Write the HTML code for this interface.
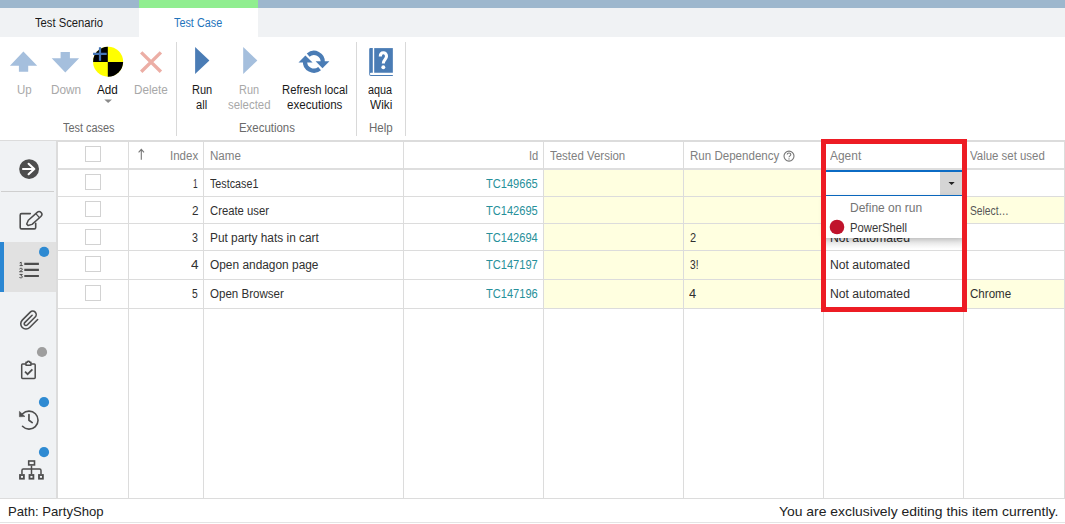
<!DOCTYPE html>
<html>
<head>
<meta charset="utf-8">
<title>Test Case</title>
<style>
*{box-sizing:border-box;margin:0;padding:0}
html,body{width:1065px;height:524px;overflow:hidden;background:#fff;font-family:"Liberation Sans",sans-serif;font-size:12px;color:#222}
.abs{position:absolute}
#topstrip{left:0;top:0;width:1065px;height:7.6px;background:#9db7cd}
#topgreen{left:139px;top:0;width:119px;height:7.6px;background:#90ee90}
#tabrow{left:0;top:7.6px;width:1065px;height:29.2px;background:#f0f2f4}
#tabactive{left:139px;top:7.6px;width:119px;height:29.2px;background:#fff}
#ribbon{left:0;top:36.8px;width:1065px;height:103.2px;background:#fff}
.vsep{width:1px;background:#d9d9d9;top:41.5px;height:94px}
#sidebar{left:0;top:141px;width:56px;height:357px;background:#f0f2f4}
#hline{left:0;top:140px;width:1065px;height:1.2px;background:#dcdcdc}
#hline2{left:56px;top:140px;width:1009px;height:2.2px;background:#dcdcdc}
#gridleft{left:56.3px;top:141px;width:1.5px;height:357px;background:#dcdcdc}
.hl{left:57px;width:1008px;height:1px;background:#dcdcdc}
.vl{top:141px;width:1px;height:357px;background:#dcdcdc}
.cell{font-size:12px;line-height:16px;white-space:nowrap;color:#222}
.cb{width:16px;height:16px;border:1px solid #d2d2d2;background:#fff;left:85px}
.yel{background:#ffffe0}
#status{left:0;top:497.5px;width:1065px;height:26.5px;background:#fff;border-top:1.6px solid #dcdcdc}
#statusb{left:0;top:521.8px;width:1065px;height:1px;background:#e4e4e4}
</style>
</head>
<body>
<div class="abs" id="topstrip"></div>
<div class="abs" id="topgreen"></div>
<div class="abs" id="tabrow"></div>
<div class="abs" id="tabactive"></div>

<div class="abs cell" style="left:35.10px;top:14.84px;color:#1a1a1a;font-size:12px;transform:scaleX(0.9367);transform-origin:0 0;">Test Scenario</div>
<div class="abs cell" style="left:174.40px;top:14.84px;color:#1f74bc;font-size:12px;transform:scaleX(0.9035);transform-origin:0 0;">Test Case</div>

<div class="abs" id="ribbon"></div>
<div class="abs cell" style="left:16.70px;top:81.84px;color:#a8a8a8;font-size:12px;transform:scaleX(0.9577);transform-origin:0 0;">Up</div>
<div class="abs cell" style="left:51.30px;top:81.84px;color:#a8a8a8;font-size:12px;transform:scaleX(0.9837);transform-origin:0 0;">Down</div>
<div class="abs cell" style="left:97.30px;top:81.84px;color:#111;font-size:12px;transform:scaleX(0.9742);transform-origin:0 0;">Add</div>
<div class="abs cell" style="left:134.40px;top:81.84px;color:#a8a8a8;font-size:12px;transform:scaleX(0.9769);transform-origin:0 0;">Delete</div>
<div class="abs cell" style="left:191.60px;top:81.64px;color:#1a1a1a;font-size:12px;transform:scaleX(0.9182);transform-origin:0 0;">Run</div>
<div class="abs cell" style="left:195.80px;top:97.14px;color:#1a1a1a;font-size:12px;transform:scaleX(0.9250);transform-origin:0 0;">all</div>
<div class="abs cell" style="left:239.20px;top:81.64px;color:#a8a8a8;font-size:12px;transform:scaleX(0.9091);transform-origin:0 0;">Run</div>
<div class="abs cell" style="left:228.00px;top:97.14px;color:#a8a8a8;font-size:12px;transform:scaleX(0.9508);transform-origin:0 0;">selected</div>
<div class="abs cell" style="left:281.50px;top:81.64px;color:#1a1a1a;font-size:12px;transform:scaleX(0.9379);transform-origin:0 0;">Refresh local</div>
<div class="abs cell" style="left:286.70px;top:97.14px;color:#1a1a1a;font-size:12px;transform:scaleX(0.9660);transform-origin:0 0;">executions</div>
<div class="abs cell" style="left:368.40px;top:81.64px;color:#1a1a1a;font-size:12px;transform:scaleX(0.9026);transform-origin:0 0;">aqua</div>
<div class="abs cell" style="left:369.50px;top:97.14px;color:#1a1a1a;font-size:12px;transform:scaleX(0.9845);transform-origin:0 0;">Wiki</div>
<div class="abs cell" style="left:62.80px;top:119.74px;color:#6a6a6a;font-size:12px;transform:scaleX(0.9083);transform-origin:0 0;">Test cases</div>
<div class="abs cell" style="left:238.50px;top:119.74px;color:#6a6a6a;font-size:12px;transform:scaleX(0.9523);transform-origin:0 0;">Executions</div>
<div class="abs cell" style="left:368.80px;top:119.74px;color:#6a6a6a;font-size:12px;transform:scaleX(0.9595);transform-origin:0 0;">Help</div>


<svg class="abs" style="left:0;top:37px" width="420" height="101" viewBox="0 37 420 101">
  <!-- up -->
  <path d="M23.4 51.5 L37.2 65.8 L28.2 65.8 L28.2 71.8 L18.9 71.8 L18.9 65.8 L9.9 65.8 Z" fill="#a5bfdd"/>
  <!-- down -->
  <path d="M60.6 51.9 L69.9 51.9 L69.9 58.3 L79.1 58.3 L65.3 72.4 L51.7 58.3 L60.6 58.3 Z" fill="#a5bfdd"/>
  <!-- add -->
  <circle cx="108.1" cy="61.7" r="15" fill="#ffff00"/>
  <path d="M107.8 62 L107.8 46.7 A15 15 0 0 0 93.1 62 Z" fill="#000"/>
  <path d="M107.8 62 L107.8 76.7 A15 15 0 0 0 123.1 62 Z" fill="#000"/>
  <path d="M93.1 53.9 H106.7 M100 47.3 V60.7" stroke="#4575b6" stroke-width="2.2" fill="none"/>
  <!-- delete -->
  <path d="M141.2 52.4 L160.9 71.7 M160.9 52.4 L141.2 71.7" stroke="#ecaea5" stroke-width="3.4" fill="none"/>
  <!-- add caret -->
  <path d="M104.3 99.4 L112 99.4 L108.15 103 Z" fill="#8a8a8a"/>
  <!-- run all -->
  <path d="M195.1 46.9 L209.4 60.5 L195.1 74.1 Z" fill="#4a7cb5"/>
  <!-- run selected -->
  <path d="M243.2 46.9 L257.3 60.5 L243.2 74.1 Z" fill="#a5bfdd"/>
  <!-- refresh -->
  <g fill="none" stroke="#4a7cb5" stroke-width="4.3">
    <path d="M308.16 55.07 A8.85 8.85 0 0 1 322.75 62.5"/>
    <path d="M319.6 68.55 A8.85 8.85 0 0 1 305.05 61"/>
  </g>
  <path d="M298.5 62.6 L312.6 62.6 L305.4 55.6 Z" fill="#4a7cb5"/>
  <path d="M315.6 61.2 L329.4 61.2 L322.5 68.2 Z" fill="#4a7cb5"/>
  <!-- book -->
  <path d="M374.2 48.1 H392.85 V72.75 H374.2 Z" fill="#4a7cb5"/>
  <path d="M369.2 49.3 A1.2 1.2 0 0 1 370.4 48.1 H372.8 V72.8 H371 A0.9 0.9 0 0 0 371 75 H392.85 V76 H370.9 A1.7 1.7 0 0 1 369.2 74.3 Z" fill="#4a7cb5"/>
  <path d="M380.3 56.6 C380.3 51.6 386.5 51.6 386.5 56.3 C386.5 59.6 383.3 59.4 383.3 63.6" fill="none" stroke="#fff" stroke-width="3.1"/>
  <circle cx="383.3" cy="67.3" r="1.95" fill="#fff"/>
</svg>
<div class="abs vsep" style="left:176px"></div>
<div class="abs vsep" style="left:356px"></div>
<div class="abs vsep" style="left:405px"></div>



<div class="abs" id="sidebar"></div>

<div class="abs" style="left:0;top:242px;width:56px;height:50px;background:#e1e1e1"></div>
<div class="abs" style="left:0;top:242px;width:4px;height:50px;background:#2b87d3"></div>
<div class="abs" style="left:1px;top:191px;width:53px;height:1px;background:#cfcfcf"></div>
<svg class="abs" style="left:0;top:141px" width="57" height="359" viewBox="0 141 57 359">
  <!-- arrow circle -->
  <circle cx="29.1" cy="169.1" r="9.9" fill="#4d4d4d"/>
  <path d="M23 169 H34.3 M28.6 163.8 L34.3 169 L28.6 174.2" fill="none" stroke="#fff" stroke-width="2.1" stroke-linecap="round" stroke-linejoin="round"/>
  <!-- edit -->
  <path d="M30.3 213.6 H21.6 A1.4 1.4 0 0 0 20.2 215 V227.5 A1.4 1.4 0 0 0 21.6 228.9 H34.3 A1.4 1.4 0 0 0 35.7 227.5 V223.2" fill="none" stroke="#4d4d4d" stroke-width="1.6" stroke-linecap="round"/>
  <g transform="translate(26.9 225.2) rotate(-41.5)">
    <path d="M0.6 -1 L4.4 -2.8 H16.2 A2.8 2.8 0 0 1 16.2 2.8 H4.4 L0.6 1 Z" fill="#f0f2f4" stroke="#4d4d4d" stroke-width="1.5" stroke-linejoin="round"/>
    <path d="M14.4 -2.8 V2.8" stroke="#4d4d4d" stroke-width="1.2"/>
  </g>
  <!-- list -->
  <path d="M24.3 263.8 H38.9 M24.3 269.9 H38.9 M24.3 276 H38.9" stroke="#4d4d4d" stroke-width="2.2"/>
  <g fill="none" stroke="#4d4d4d" stroke-width="1" stroke-linejoin="round">
    <path transform="translate(0 263.9)" d="M19.7 -0.9 L21.2 -1.7 V1.6 M19.6 1.7 H22.8"/>
    <path transform="translate(0 270)" d="M19.5 -0.9 C19.7 -2 22.5 -2 22.4 -0.8 C22.3 0.2 20.2 0.8 19.5 1.7 H22.8"/>
    <path transform="translate(0 276.1)" d="M19.5 -1.65 H22.3 L20.9 -0.2 C23.1 -0.2 23 1.8 20.8 1.7 C20.1 1.7 19.7 1.6 19.4 1.3"/>
  </g>
  <circle cx="44.1" cy="251.9" r="5.1" fill="#2e8ad2"/>
  <!-- paperclip -->
  <g transform="translate(19.0 309.9) scale(0.87)" fill="none" stroke="#4d4d4d" stroke-width="1.8" stroke-linecap="round" stroke-linejoin="round">
    <path d="M21.44 11.05l-9.19 9.19a6 6 0 0 1-8.49-8.49l9.19-9.19a4 4 0 0 1 5.66 5.66l-9.2 9.19a2 2 0 0 1-2.83-2.83l8.49-8.48"/>
  </g>
  <!-- clipboard -->
  <circle cx="42" cy="352" r="5.1" fill="#9e9e9e"/>
  <path d="M26 364 H22.6 A0.9 0.9 0 0 0 21.7 364.9 V377.5 A0.9 0.9 0 0 0 22.6 378.4 H34.3 A0.9 0.9 0 0 0 35.2 377.5 V364.9 A0.9 0.9 0 0 0 34.3 364 H30.9" fill="none" stroke="#4d4d4d" stroke-width="1.5"/>
  <path d="M26 365.2 V362.3 H27.2 A1.3 1.3 0 0 1 29.7 362.3 H30.9 V365.2 Z" fill="none" stroke="#4d4d4d" stroke-width="1.5" stroke-linejoin="round"/>
  <path d="M25 371.6 L27.6 374.2 L32.4 369.3" fill="none" stroke="#4d4d4d" stroke-width="1.7"/>
  <!-- history -->
  <circle cx="44" cy="402.1" r="5.1" fill="#2e8ad2"/>
  <path d="M22.6 413.8 A9 9 0 1 1 22.5 426.3" fill="none" stroke="#4d4d4d" stroke-width="1.6" stroke-linecap="round"/>
  <path d="M19.4 411.3 L19.4 416.8 L25 416.5 Z" fill="#4d4d4d" stroke="#4d4d4d" stroke-width="0.5" stroke-linejoin="round"/>
  <path d="M28.96 414.6 V420.2 L32.2 422.6" fill="none" stroke="#4d4d4d" stroke-width="1.7" stroke-linecap="round" stroke-linejoin="round"/>
  <!-- sitemap -->
  <circle cx="44" cy="452.1" r="5.1" fill="#2e8ad2"/>
  <g fill="none" stroke="#4d4d4d" stroke-width="1.8">
    <rect x="28.7" y="461" width="5.8" height="3.9" stroke-width="1.6"/>
    <rect x="20" y="475" width="3.9" height="3.7"/>
    <rect x="29.5" y="475" width="3.9" height="3.7"/>
    <rect x="39" y="475" width="3.9" height="3.7"/>
    <path d="M31.5 465.5 V474 M21.95 474 V470.5 A1.4 1.4 0 0 1 23.35 469.1 H39.6 A1.4 1.4 0 0 1 41 470.5 V474" stroke-width="1.5"/>
  </g>
</svg>


<div class="abs" id="hline"></div>
<div class="abs" id="hline2"></div>
<div class="abs" id="gridleft"></div>
<div class="abs yel" style="left:544px;top:170.0px;width:279.5px;height:27.0px"></div>
<div class="abs yel" style="left:544px;top:197.0px;width:279.5px;height:27.0px"></div>
<div class="abs yel" style="left:964px;top:197.0px;width:101px;height:27.0px"></div>
<div class="abs yel" style="left:544px;top:224.0px;width:279.5px;height:27.0px"></div>
<div class="abs yel" style="left:544px;top:251.0px;width:279.5px;height:29.0px"></div>
<div class="abs yel" style="left:544px;top:280.0px;width:279.5px;height:29.0px"></div>
<div class="abs yel" style="left:964px;top:280.0px;width:101px;height:29.0px"></div>
<div class="abs" style="left:57px;top:168px;width:1008px;height:2px;background:#dedede"></div>
<div class="abs hl" style="top:196.0px"></div>
<div class="abs hl" style="top:223.0px"></div>
<div class="abs hl" style="top:250.0px"></div>
<div class="abs hl" style="top:279.0px"></div>
<div class="abs hl" style="top:308.0px"></div>
<div class="abs vl" style="left:128.0px"></div>
<div class="abs vl" style="left:203.0px"></div>
<div class="abs vl" style="left:403.0px"></div>
<div class="abs vl" style="left:543.0px"></div>
<div class="abs vl" style="left:683.0px"></div>
<div class="abs vl" style="left:823.0px"></div>
<div class="abs vl" style="left:963.0px"></div>
<div class="abs vl" style="left:1064px"></div>
<div class="abs cb" style="top:146px"></div>
<div class="abs cb" style="top:174px"></div>
<div class="abs cb" style="top:201px"></div>
<div class="abs cb" style="top:228.5px"></div>
<div class="abs cb" style="top:256px"></div>
<div class="abs cb" style="top:285px"></div>
<svg class="abs" style="left:136px;top:147px" width="12" height="14" viewBox="136 147 12 14"><path d="M141.3 159.8 V149.6 M138.6 152.4 L141.3 149.4 L144 152.4" fill="none" stroke="#777" stroke-width="1.1"/></svg>
<div class="abs cell" style="left:169.80px;top:147.64px;color:#808080;font-size:12px;transform:scaleX(0.9608);transform-origin:0 0;">Index</div>
<div class="abs cell" style="left:210.00px;top:147.64px;color:#808080;font-size:12px;transform:scaleX(0.9656);transform-origin:0 0;">Name</div>
<div class="abs cell" style="left:528.70px;top:147.64px;color:#808080;font-size:12px;transform:scaleX(0.9300);transform-origin:0 0;">Id</div>
<div class="abs cell" style="left:549.90px;top:147.64px;color:#808080;font-size:12px;transform:scaleX(0.9555);transform-origin:0 0;">Tested Version</div>
<div class="abs cell" style="left:690.00px;top:147.64px;color:#808080;font-size:12px;transform:scaleX(0.9628);transform-origin:0 0;">Run Dependency</div>
<svg class="abs" style="left:782px;top:149px" width="14" height="14" viewBox="782 149 14 14"><circle cx="789" cy="156.1" r="5" fill="none" stroke="#777" stroke-width="1.1"/><path d="M787.2 154.6 C787.2 152.4 790.8 152.4 790.8 154.6 C790.8 155.9 789 155.9 789 157.3" fill="none" stroke="#777" stroke-width="1.1"/><circle cx="789" cy="158.9" r="0.7" fill="#777"/></svg>
<div class="abs cell" style="left:829.70px;top:147.64px;color:#808080;font-size:12px;transform:scaleX(0.9952);transform-origin:0 0;">Agent</div>
<div class="abs cell" style="left:969.90px;top:147.64px;color:#808080;font-size:12px;transform:scaleX(0.9529);transform-origin:0 0;">Value set used</div>
<div class="abs cell" style="left:192.70px;top:175.54px;color:#303030;font-size:12px;transform:scaleX(0.6917);transform-origin:0 0;">1</div>
<div class="abs cell" style="left:210.00px;top:175.54px;color:#303030;font-size:12px;transform:scaleX(0.8955);transform-origin:0 0;">Testcase1</div>
<div class="abs cell" style="left:486.20px;top:175.54px;color:#26909a;font-size:12px;transform:scaleX(0.9242);transform-origin:0 0;">TC149665</div>
<div class="abs cell" style="left:191.90px;top:202.54px;color:#303030;font-size:12px;transform:scaleX(0.9774);transform-origin:0 0;">2</div>
<div class="abs cell" style="left:210.00px;top:202.54px;color:#303030;font-size:12px;transform:scaleX(0.9410);transform-origin:0 0;">Create user</div>
<div class="abs cell" style="left:486.20px;top:202.54px;color:#26909a;font-size:12px;transform:scaleX(0.9242);transform-origin:0 0;">TC142695</div>
<div class="abs cell" style="left:192.20px;top:229.64px;color:#303030;font-size:12px;transform:scaleX(0.8872);transform-origin:0 0;">3</div>
<div class="abs cell" style="left:210.00px;top:229.64px;color:#303030;font-size:12px;transform:scaleX(0.9886);transform-origin:0 0;">Put party hats in cart</div>
<div class="abs cell" style="left:486.20px;top:229.64px;color:#26909a;font-size:12px;transform:scaleX(0.9242);transform-origin:0 0;">TC142694</div>
<div class="abs cell" style="left:191.40px;top:256.74px;color:#303030;font-size:12px;transform:scaleX(1.1278);transform-origin:0 0;">4</div>
<div class="abs cell" style="left:210.00px;top:256.74px;color:#303030;font-size:12px;transform:scaleX(0.9913);transform-origin:0 0;">Open andagon page</div>
<div class="abs cell" style="left:486.20px;top:256.74px;color:#26909a;font-size:12px;transform:scaleX(0.9242);transform-origin:0 0;">TC147197</div>
<div class="abs cell" style="left:192.40px;top:286.14px;color:#303030;font-size:12px;transform:scaleX(0.8571);transform-origin:0 0;">5</div>
<div class="abs cell" style="left:210.00px;top:286.14px;color:#303030;font-size:12px;transform:scaleX(0.9622);transform-origin:0 0;">Open Browser</div>
<div class="abs cell" style="left:486.20px;top:286.14px;color:#26909a;font-size:12px;transform:scaleX(0.9242);transform-origin:0 0;">TC147196</div>
<div class="abs cell" style="left:689.80px;top:229.64px;color:#303030;font-size:12px;transform:scaleX(0.9173);transform-origin:0 0;">2</div>
<div class="abs cell" style="left:689.80px;top:256.74px;color:#303030;font-size:12px;transform:scaleX(0.8500);transform-origin:0 0;">3!</div>
<div class="abs cell" style="left:689.30px;top:286.14px;color:#303030;font-size:12px;transform:scaleX(1.0677);transform-origin:0 0;">4</div>
<div class="abs cell" style="left:830.10px;top:229.64px;color:#303030;font-size:12px;transform:scaleX(1.0152);transform-origin:0 0;">Not automated</div>
<div class="abs cell" style="left:830.10px;top:256.74px;color:#303030;font-size:12px;transform:scaleX(1.0152);transform-origin:0 0;">Not automated</div>
<div class="abs cell" style="left:830.10px;top:286.14px;color:#303030;font-size:12px;transform:scaleX(1.0152);transform-origin:0 0;">Not automated</div>
<div class="abs cell" style="left:969.90px;top:202.54px;color:#555;font-size:12px;transform:scaleX(0.8556);transform-origin:0 0;">Select&hellip;</div>
<div class="abs cell" style="left:969.90px;top:286.14px;color:#303030;font-size:12px;transform:scaleX(0.9649);transform-origin:0 0;">Chrome</div>
<div class="abs" style="left:824px;top:169.6px;width:138px;height:2.5px;background:#0b6bc4"></div>
<div class="abs" style="left:824px;top:172.1px;width:138px;height:22.7px;background:#fff"></div>
<div class="abs" style="left:940px;top:172.1px;width:22px;height:22.7px;background:#d5d5d5"></div>
<div class="abs" style="left:824px;top:194.8px;width:138px;height:1.2px;background:#0b6bc4"></div>
<svg class="abs" style="left:946px;top:180px" width="10" height="6" viewBox="946 180 10 6"><path d="M948.5 182 H954.7 L951.6 185 Z" fill="#222"/></svg>
<div class="abs" style="left:824px;top:196px;width:138px;height:42px;background:#fff;box-shadow:0 1px 6px rgba(0,0,0,0.12)"></div>
<div class="abs" style="left:824px;top:238px;width:138px;height:11px;background:linear-gradient(to bottom,rgba(0,0,0,0.17),rgba(0,0,0,0.08) 45%,rgba(0,0,0,0))"></div>
<div class="abs cell" style="left:850.10px;top:200.04px;color:#747474;font-size:12px;transform:scaleX(1.0021);transform-origin:0 0;">Define on run</div>
<div class="abs cell" style="left:850.10px;top:219.64px;color:#383838;font-size:12px;transform:scaleX(0.9407);transform-origin:0 0;">PowerShell</div>
<svg class="abs" style="left:828px;top:218px" width="18" height="18" viewBox="828 218 18 18"><circle cx="837" cy="227" r="7.3" fill="#c0132c"/></svg>
<div class="abs" style="left:821.2px;top:139px;width:145.8px;height:173.2px;border:5px solid #ed1c24"></div>


<div class="abs" id="status"></div>
<div class="abs" id="statusb"></div>
<div class="abs cell" style="left:7.80px;top:503.90px;color:#222;font-size:13px;transform:scaleX(1.0100);transform-origin:0 0;">Path: PartyShop</div>
<div class="abs cell" style="left:778.80px;top:503.70px;color:#222;font-size:13px;transform:scaleX(1.0707);transform-origin:0 0;">You are exclusively editing this item currently.</div>

</body>
</html>
